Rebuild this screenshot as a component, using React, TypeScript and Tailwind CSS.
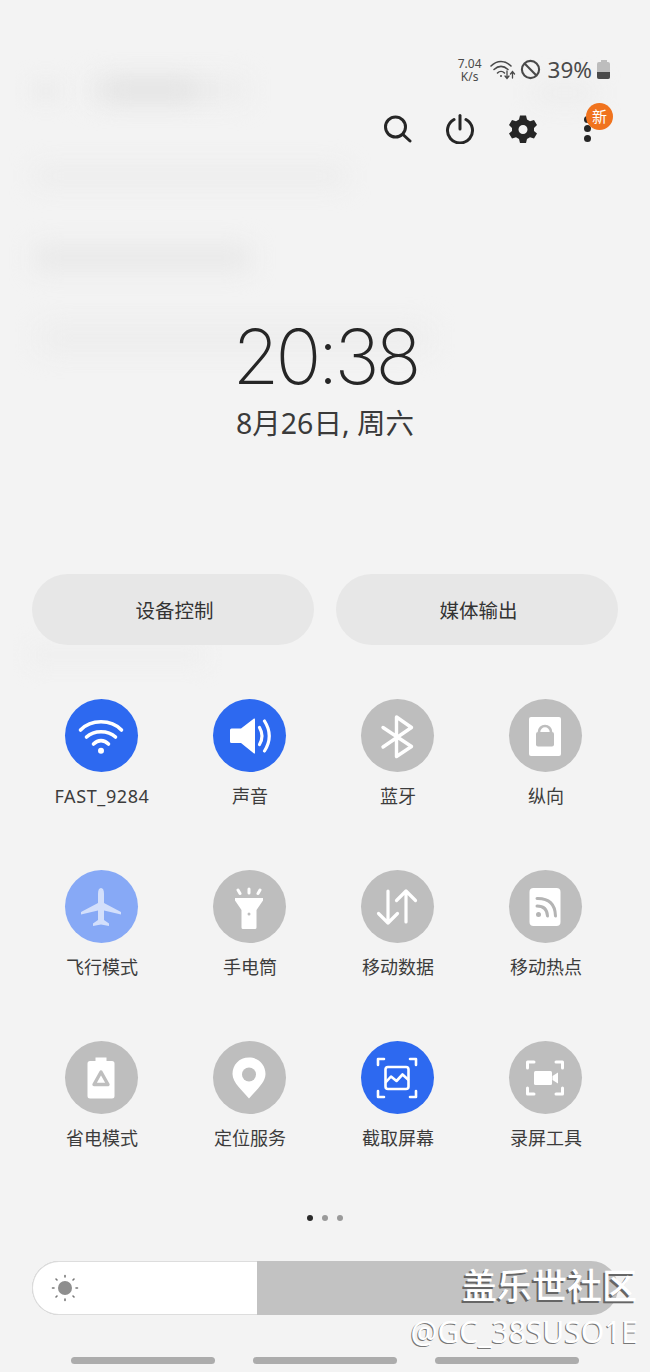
import type { ReactNode } from 'react';

const cjk = { fontFamily: '"Noto Sans", "Noto Sans CJK SC", sans-serif' };

function WifiIcon() {
    return (
        <svg viewBox="0 0 48 48" className="w-12 h-12" fill="none" stroke="white" strokeWidth="3.600" strokeLinecap="round">
            <path d="M3.500 18 C14 7 34 7 44.500 18" />
            <path d="M9.500 25 C17 18 31 18 38.500 25" />
            <path d="M16.500 32 C21 27.500 27 27.500 31.500 32" />
            <circle cx="24" cy="38.700" r="3" fill="white" stroke="none" />
        </svg>
    );
}

function SoundIcon() {
    return (
        <svg viewBox="0 0 48 48" className="w-12 h-12" fill="none">
            <path d="M6.500 16.500 L16 16.500 L29 6.500 Q30 6 30 7.500 L30 40.500 Q30 42 29 41.500 L16 31 L6.500 31 Q5 31 5 29.500 L5 18 Q5 16.500 6.500 16.500 Z" fill="white" />
            <path d="M34.500 15.500 Q39.500 24 34.500 32.500" stroke="white" strokeWidth="3.200" strokeLinecap="round" />
            <path d="M39.500 9 Q49 24 39.500 39" stroke="white" strokeWidth="3.200" strokeLinecap="round" />
        </svg>
    );
}

function BluetoothIcon() {
    return (
        <svg viewBox="0 0 48 48" className="w-12 h-12" fill="none" stroke="white" strokeWidth="3.400" strokeLinecap="round" strokeLinejoin="round">
            <path d="M10 15.500 L38.500 34.500 L23.500 44.500 L23.500 5 L38.500 15.500 L10 35" />
        </svg>
    );
}

function PortraitIcon() {
    return (
        <svg viewBox="0 0 48 48" className="w-12 h-12">
            <rect x="8" y="5" width="32" height="39" rx="2" fill="white" />
            <path d="M18 20 a6 6 0 0 1 12 0" fill="none" stroke="#bebebe" strokeWidth="2.600" />
            <rect x="15" y="20" width="18" height="14.500" rx="2" fill="#bebebe" />
        </svg>
    );
}

function PlaneIcon() {
    return (
        <svg viewBox="0 0 48 48" className="w-12 h-12">
            <path
                d="M24 5 Q27 5 27 11 L27 20 L44 29 L44 31.500 L27 27.500 L27 37 L32 40.500 L32 43 L24 41.500 L16 43 L16 40.500 L21 37 L21 27.500 L4 31.500 L4 29 L21 20 L21 11 Q21 5 24 5 Z"
                fill="#d3dffb"
            />
        </svg>
    );
}

function FlashlightIcon() {
    return (
        <svg viewBox="0 0 48 48" className="w-12 h-12">
            <path d="M10 15 L38 15 L38 17.500 L31.500 27 L31.500 44.500 Q31.500 46 30 46 L18 46 Q16.500 46 16.500 44.500 L16.500 27 L10 17.500 Z" fill="white" />
            <circle cx="24" cy="31" r="1.500" fill="#bebebe" />
            <path d="M24 6 L24 10 M13 7 L15 10.500 M35 7 L33 10.500" stroke="white" strokeWidth="3" strokeLinecap="round" />
        </svg>
    );
}

function DataIcon() {
    return (
        <svg viewBox="0 0 48 48" className="w-12 h-12" fill="none" stroke="white" strokeWidth="3.200" strokeLinecap="round" strokeLinejoin="round">
            <path d="M15 8 L15 40 M5.500 30.500 L15 40 L24.500 30.500" />
            <path d="M33 39 L33 8 M23.500 17.500 L33 8 L42.500 17.500" />
        </svg>
    );
}

function HotspotIcon() {
    return (
        <svg viewBox="0 0 48 48" className="w-12 h-12">
            <rect x="8.500" y="5" width="31" height="38" rx="4" fill="white" />
            <circle cx="17.500" cy="31.500" r="2.500" fill="#b4b4b4" />
            <path d="M16 23 Q26 23 26.500 33" fill="none" stroke="#b4b4b4" strokeWidth="3" strokeLinecap="round" />
            <path d="M16 15.500 Q34 15 34.500 33" fill="none" stroke="#b4b4b4" strokeWidth="3" strokeLinecap="round" />
        </svg>
    );
}

function BatterySaverIcon() {
    return (
        <svg viewBox="0 0 48 48" className="w-12 h-12">
            <path d="M18.500 3.500 H29.500 V7 H35 Q37.500 7 37.500 9.500 V42 Q37.500 44.500 35 44.500 H13 Q10.500 44.500 10.500 42 V9.500 Q10.500 7 13 7 H18.500 Z" fill="white" />
            <path d="M24 18 L31 30.500 L17 30.500 Z" fill="none" stroke="#bebebe" strokeWidth="3.400" strokeLinejoin="round" />
        </svg>
    );
}

function LocationIcon() {
    return (
        <svg viewBox="0 0 48 48" className="w-12 h-12">
            <path d="M24 3.500 C14 3.500 7.500 11 7.500 20 C7.500 29 18 37 24 44.500 C30 37 40.500 29 40.500 20 C40.500 11 34 3.500 24 3.500 Z" fill="white" />
            <circle cx="24" cy="20.500" r="7" fill="#bebebe" />
        </svg>
    );
}

function ScreenshotIcon() {
    return (
        <svg viewBox="0 0 48 48" className="w-12 h-12" fill="none" stroke="white" strokeWidth="2.600" strokeLinecap="round" strokeLinejoin="round">
            <path d="M5 11 V5 H11 M37 5 H43 V11 M5 37 V43 H11 M37 43 H43 V37" />
            <rect x="12.500" y="13" width="23" height="22" rx="2.500" />
            <path d="M13 28 L18 22.500 L23.500 27 L29.500 20.500 L35 25.500" />
        </svg>
    );
}

function RecordIcon() {
    return (
        <svg viewBox="0 0 48 48" className="w-12 h-12" fill="none" stroke="white" strokeWidth="3" strokeLinecap="round" strokeLinejoin="round">
            <path d="M6.500 14 V8 H13 M35 8 H41.500 V14 M6.500 34 V40 H13 M35 40 H41.500 V34" />
            <rect x="13" y="17" width="18" height="14" rx="1.500" fill="white" stroke="none" />
            <path d="M31.500 22 L37 18.500 V29.500 L31.500 26 Z" fill="white" stroke="none" />
        </svg>
    );
}

function Tile({ bg, label, icon, labelClass = '' }: { bg: string; label: string; icon: ReactNode; labelClass?: string }) {
    return (
        <div className="flex flex-col items-center">
            <div className={`w-[73px] h-[73px] rounded-full flex items-center justify-center ${bg}`}>{icon}</div>
            <span className={`mt-[12px] pl-[2px] text-[18px] leading-[24px] text-[#3c3c3c] whitespace-nowrap ${labelClass}`}>{label}</span>
        </div>
    );
}

const BLUE = 'bg-[#2d69f0]';
const GREY = 'bg-[#bebebe]';

const tiles = [
    { label: 'FAST_9284', bg: BLUE, icon: <WifiIcon />, labelClass: 'tracking-[0.6px]' },
    { label: '声音', bg: BLUE, icon: <SoundIcon /> },
    { label: '蓝牙', bg: GREY, icon: <BluetoothIcon /> },
    { label: '纵向', bg: GREY, icon: <PortraitIcon /> },
    { label: '飞行模式', bg: 'bg-[#87a9f6]', icon: <PlaneIcon /> },
    { label: '手电筒', bg: GREY, icon: <FlashlightIcon /> },
    { label: '移动数据', bg: GREY, icon: <DataIcon /> },
    { label: '移动热点', bg: GREY, icon: <HotspotIcon /> },
    { label: '省电模式', bg: GREY, icon: <BatterySaverIcon /> },
    { label: '定位服务', bg: GREY, icon: <LocationIcon /> },
    { label: '截取屏幕', bg: BLUE, icon: <ScreenshotIcon /> },
    { label: '录屏工具', bg: GREY, icon: <RecordIcon /> },
];

export default function App() {
    return (
        <div className="relative w-[650px] h-[1372px] overflow-hidden bg-[#f3f3f3] flex flex-col" style={cjk}>
            {/* Blurred notifications behind the panel */}
            <div className="absolute left-[90px] top-[78px] w-[155px] h-[24px] bg-[#ececec] blur-[12px]" />
            <div className="absolute left-[105px] top-[82px] w-[90px] h-[16px] bg-[#e0e0e0] blur-[12px]" />
            <div className="absolute left-[32px] top-[82px] w-[28px] h-[18px] bg-[#ebebeb] blur-[10px]" />
            <div className="absolute left-[35px] top-[168px] w-[310px] h-[16px] bg-[#ebebeb] blur-[12px]" />
            <div className="absolute left-[35px] top-[246px] w-[215px] h-[24px] bg-[#e8e8e8] blur-[12px]" />
            <div className="absolute left-[40px] top-[328px] w-[390px] h-[20px] bg-[#ebebeb] blur-[14px]" />
            <div className="absolute left-[535px] top-[85px] w-[60px] h-[16px] bg-[#ebebeb] blur-[12px]" />
            <div className="absolute left-[30px] top-[645px] w-[175px] h-[20px] bg-[#efefef] blur-[10px]" />

            {/* Status bar */}
            <div className="relative h-[108px] pt-[57px] pr-[40px] flex items-start justify-end text-[#4a4a4a]">
                <div className="flex flex-col items-center text-[12px] leading-[13px] mr-[8px]">
                    <span>7.04</span>
                    <span>K/s</span>
                </div>
                <svg viewBox="0 0 26 22" className="w-[26px] h-[22px] mt-[2px]" fill="none" stroke="#4a4a4a" strokeWidth="1.600" strokeLinecap="round">
                    <path d="M1 7 C7 1 15 1 21 7" />
                    <path d="M4 10.500 C8.500 6.500 13.500 6.500 18 10.500" />
                    <path d="M7.500 14 C9.500 12 12.500 12 14.500 14" />
                    <circle cx="11" cy="17" r="1" fill="#4a4a4a" stroke="none" />
                    <path d="M17 12 V19 M15 17 L17 19.500 L19 17 M22.500 19 V13 M20.500 15 L22.500 12.500 L24.500 15" strokeWidth="1.300" />
                </svg>
                <svg viewBox="0 0 22 22" className="w-[21px] h-[21px] ml-[4px] mt-[2px]" fill="none" stroke="#4a4a4a" strokeWidth="2.200">
                    <circle cx="11" cy="11" r="9" />
                    <path d="M4.800 4.800 L17.200 17.200" />
                </svg>
                <span className="ml-[7px] mt-[1px] text-[22.5px] leading-[24px] text-[#4a4a4a]">39%</span>
                <div className="ml-[5px] mt-[3px] w-[13px] h-[19px] flex flex-col items-center">
                    <div className="w-[6px] h-[2px] bg-[#bdbdbd]" />
                    <div className="w-[13px] h-[17px] rounded-[2px] bg-[#bdbdbd] flex flex-col justify-end overflow-hidden">
                        <div className="h-[7px] bg-[#4a4a4a]" />
                    </div>
                </div>
            </div>

            {/* Actions */}
            <div className="relative h-[41px] pl-[382px] flex items-center">
                <svg viewBox="0 0 30 30" className="w-[30px] h-[30px]" fill="none" stroke="#262626" strokeWidth="3" strokeLinecap="round">
                    <circle cx="13.500" cy="13" r="10" />
                    <path d="M21 20.500 L28 27" />
                </svg>
                <svg viewBox="0 0 30 30" className="w-[30px] h-[30px] ml-[33px]" fill="none" stroke="#262626" strokeWidth="3" strokeLinecap="round">
                    <path d="M9 5.500 A12.500 12.500 0 1 0 21 5.500" />
                    <path d="M15 1.500 V15" />
                </svg>
                <svg viewBox="0 0 30 30" className="w-[30px] h-[30px] ml-[33px]">
                    <path
                        fillRule="evenodd"
                        d="M12 1.500 H18 L19 5.500 L22 7.200 L26 6 L29 11 L26 14 V17 L29 19.500 L26 24.500 L22 23.200 L19 25 L18 29 H12 L11 25 L8 23.200 L4 24.500 L1 19.500 L4 17 V14 L1 11 L4 6 L8 7.200 L11 5.500 Z M15 11 A4.500 4.500 0 1 0 15 20 A4.500 4.500 0 1 0 15 11 Z"
                        fill="#262626"
                    />
                </svg>
                <div className="relative ml-[45px] w-[8px] h-[26px] flex flex-col justify-between items-center">
                    <div className="w-[7px] h-[7px] rounded-full bg-[#262626]" />
                    <div className="w-[7px] h-[7px] rounded-full bg-[#262626]" />
                    <div className="w-[7px] h-[7px] rounded-full bg-[#262626]" />
                    <div className="absolute left-[3px] top-[-13px] w-[27px] h-[27px] rounded-full bg-[#f0731e] text-white text-[15px] leading-[27px] text-center">
                        新
                    </div>
                </div>
            </div>

            {/* Clock */}
            <div className="relative mt-[162px] flex flex-col items-center">
                <div
                    className="h-[90px] text-[76px] leading-[90px] font-extralight text-[#262626] tracking-[-4px]"
                    style={{ fontFamily: 'Inter, sans-serif' }}
                >
                    20:38
                </div>
                <div className="mt-[4px] text-[28.5px] leading-[36px] text-[#3a3a3a]">8月26日, 周六</div>
            </div>

            {/* Device / media buttons */}
            <div className="relative mt-[133px] px-[32px] flex gap-[22px]">
                <div className="w-[282px] h-[71px] rounded-full bg-[#e7e7e7] flex items-center justify-center pt-[2px] pl-[3px] text-[19.5px] text-[#333333]">
                    设备控制
                </div>
                <div className="w-[282px] h-[71px] rounded-full bg-[#e7e7e7] flex items-center justify-center pt-[2px] pl-[3px] text-[19.5px] text-[#333333]">
                    媒体输出
                </div>
            </div>

            {/* Quick settings */}
            <div className="relative mt-[54px] pl-[27px] grid grid-cols-[repeat(4,148px)] auto-rows-[171px]">
                {tiles.map((tile) => (
                    <Tile key={tile.label} {...tile} />
                ))}
            </div>

            {/* Pager */}
            <div className="mt-[3px] flex items-center justify-center gap-[9px]">
                <div className="w-[6px] h-[6px] rounded-full bg-[#2a2a2a]" />
                <div className="w-[6px] h-[6px] rounded-full bg-[#9a9a9a]" />
                <div className="w-[6px] h-[6px] rounded-full bg-[#9a9a9a]" />
            </div>

            {/* Brightness */}
            <div className="mt-[40px] ml-[32px] w-[586px] h-[54px] rounded-full bg-[#c2c2c2] overflow-hidden flex">
                <div className="w-[225px] h-full bg-white border border-r-0 border-[#dddddd] rounded-l-full flex items-center pl-[18px]">
                    <svg viewBox="0 0 28 28" className="w-[28px] h-[28px]">
                        <circle cx="14" cy="14" r="7" fill="#8e8e8e" />
                        <path
                            d="M14 1.500 V3 M14 25 V26.500 M1.500 14 H3 M25 14 H26.500 M5 5 L6 6 M22 22 L23 23 M23 5 L22 6 M6 22 L5 23"
                            stroke="#777777"
                            strokeWidth="1.600"
                            strokeLinecap="round"
                        />
                    </svg>
                </div>
            </div>

            {/* Nav bar */}
            <div className="mt-[42px] ml-[71px] flex gap-[38px]">
                <div className="w-[144px] h-[7px] rounded-full bg-[#acacac]" />
                <div className="w-[144px] h-[7px] rounded-full bg-[#acacac]" />
                <div className="w-[144px] h-[7px] rounded-full bg-[#acacac]" />
            </div>

            {/* Watermark */}
            <div
                className="absolute right-[13px] top-[1259px] text-[35px] leading-[50px] font-medium text-white [text-shadow:-2px_2px_0_#666666]"
                style={{ fontFamily: '"Noto Sans CJK SC", sans-serif' }}
            >
                盖乐世社区
            </div>
            <div className="absolute right-[12px] top-[1312px] text-[30px] leading-[40px] text-white [text-shadow:-1px_1px_0_#777777]">
                @GC_38SUSO1E
            </div>
        </div>
    );
}
